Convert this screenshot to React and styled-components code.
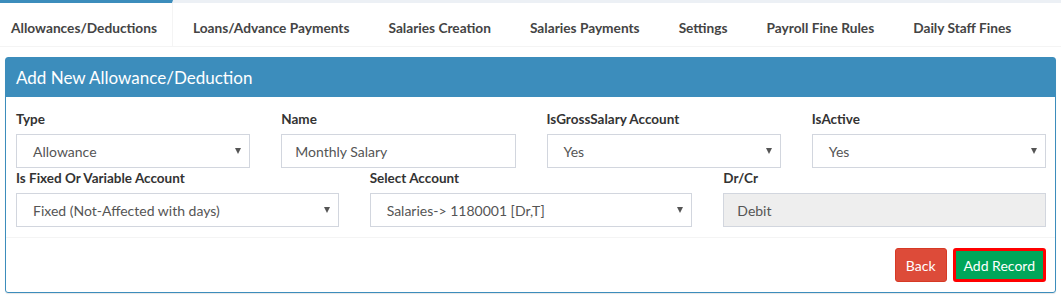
import React from 'react';
import styled, { createGlobalStyle } from 'styled-components';

const GlobalStyle = createGlobalStyle`
    html, body {
        margin: 0;
        padding: 0;
        background: #fff;
    }
    body {
        font-family: Lato, 'Liberation Sans', sans-serif;
        color: #333;
    }
`;

const tabs = [
    'Allowances/Deductions',
    'Loans/Advance Payments',
    'Salaries Creation',
    'Salaries Payments',
    'Settings',
    'Payroll Fine Rules',
    'Daily Staff Fines',
];

const Page = styled.div`
    width: 1061px;
    height: 297px;
    overflow: hidden;
`;

const TabBar = styled.ul`
    display: flex;
    margin: 0;
    padding: 0;
    list-style: none;
    border-top: 3px solid #ecf0f5;
    border-bottom: 1px solid #f4f4f4;
`;

const Tab = styled.li`
    margin-top: -3px;
    margin-right: 2px;
    border-top: 3px solid ${(p) => (p.$active ? '#3c8dbc' : 'transparent')};
    border-right: 1px solid ${(p) => (p.$active ? '#f4f4f4' : 'transparent')};
    padding-top: 5px;
    padding-left: ${(p) => (p.$active ? '11px' : '18px')};
    padding-right: ${(p) => (p.$active ? '15px' : '18px')};
    height: 38px;
    display: flex;
    align-items: center;
    font-size: 13.7px;
    font-weight: 700;
    color: #444;
    white-space: nowrap;
`;

const Panel = styled.div`
    margin: 10px 5px 0;
    border: 1px solid #3c8dbc;
    border-radius: 3px;
    box-shadow: 0 1px 1px rgba(0, 0, 0, 0.1);
`;

const PanelHeading = styled.div`
    background: #3c8dbc;
    color: #fff;
    height: 39px;
    display: flex;
    align-items: center;
    padding: 0 10px;
    font-size: 17px;
`;

const PanelBody = styled.div`
    padding: 13px 9px 10px 10px;
    border-bottom: 1px solid #f4f4f4;
`;

const Row = styled.div`
    display: grid;
    grid-template-columns: repeat(${(p) => p.$cols}, 1fr);
    column-gap: 31px;
    margin-bottom: ${(p) => (p.$last ? '0' : '1px')};
`;

const Field = styled.div`
    display: flex;
    flex-direction: column;
`;

const Label = styled.label`
    font-size: 13.5px;
    font-weight: 700;
    color: #333;
    height: 18px;
    line-height: 18px;
    margin-bottom: 6px;
`;

const Control = styled.div`
    position: relative;
    height: 34px;
    box-sizing: border-box;
    border: 1px solid #d2d6de;
    background: ${(p) => (p.$disabled ? '#eee' : '#fff')};
    display: flex;
    align-items: center;
    padding-left: ${(p) => (p.$select ? '16px' : '13px')};
    font-size: 14px;
    color: #555;
`;

const Caret = styled.span`
    position: absolute;
    right: 8px;
    top: 50%;
    transform: translateY(-50%);
    width: 0;
    height: 0;
    border-left: 3px solid transparent;
    border-right: 3px solid transparent;
    border-top: 6px solid #555;
`;

const Footer = styled.div`
    display: flex;
    justify-content: flex-end;
    gap: 6px;
    padding: 10px 9px 10px 10px;
`;

const Button = styled.button`
    height: 34px;
    padding: 0 ${(p) => (p.$variant === 'success' ? '8px' : '10px')};
    border-radius: 3px;
    font-family: Lato, 'Liberation Sans', sans-serif;
    font-size: 14px;
    color: #fff;
    cursor: pointer;
    background: ${(p) => (p.$variant === 'success' ? '#00a65a' : '#dd4b39')};
    border: ${(p) => (p.$variant === 'success' ? '3px solid #f00' : '1px solid #d73925')};
`;

const SelectBox = ({ value }) => (
    <Control $select>
        {value}
        <Caret />
    </Control>
);

const App = () => {
    return (
        <Page>
            <GlobalStyle />
            <TabBar>
                {tabs.map((t, i) => (
                    <Tab key={t} $active={i === 0}>
                        {t}
                    </Tab>
                ))}
            </TabBar>
            <Panel>
                <PanelHeading>Add New Allowance/Deduction</PanelHeading>
                <PanelBody>
                    <Row $cols={4}>
                        <Field>
                            <Label>Type</Label>
                            <SelectBox value="Allowance" />
                        </Field>
                        <Field>
                            <Label>Name</Label>
                            <Control>Monthly Salary</Control>
                        </Field>
                        <Field>
                            <Label>IsGrossSalary Account</Label>
                            <SelectBox value="Yes" />
                        </Field>
                        <Field>
                            <Label>IsActive</Label>
                            <SelectBox value="Yes" />
                        </Field>
                    </Row>
                    <Row $cols={3} $last>
                        <Field>
                            <Label>Is Fixed Or Variable Account</Label>
                            <SelectBox value="Fixed (Not-Affected with days)" />
                        </Field>
                        <Field>
                            <Label>Select Account</Label>
                            <SelectBox value="Salaries-> 1180001 [Dr,T]" />
                        </Field>
                        <Field>
                            <Label>Dr/Cr</Label>
                            <Control $disabled>Debit</Control>
                        </Field>
                    </Row>
                </PanelBody>
                <Footer>
                    <Button $variant="danger">Back</Button>
                    <Button $variant="success">Add Record</Button>
                </Footer>
            </Panel>
        </Page>
    );
};

export default App;
